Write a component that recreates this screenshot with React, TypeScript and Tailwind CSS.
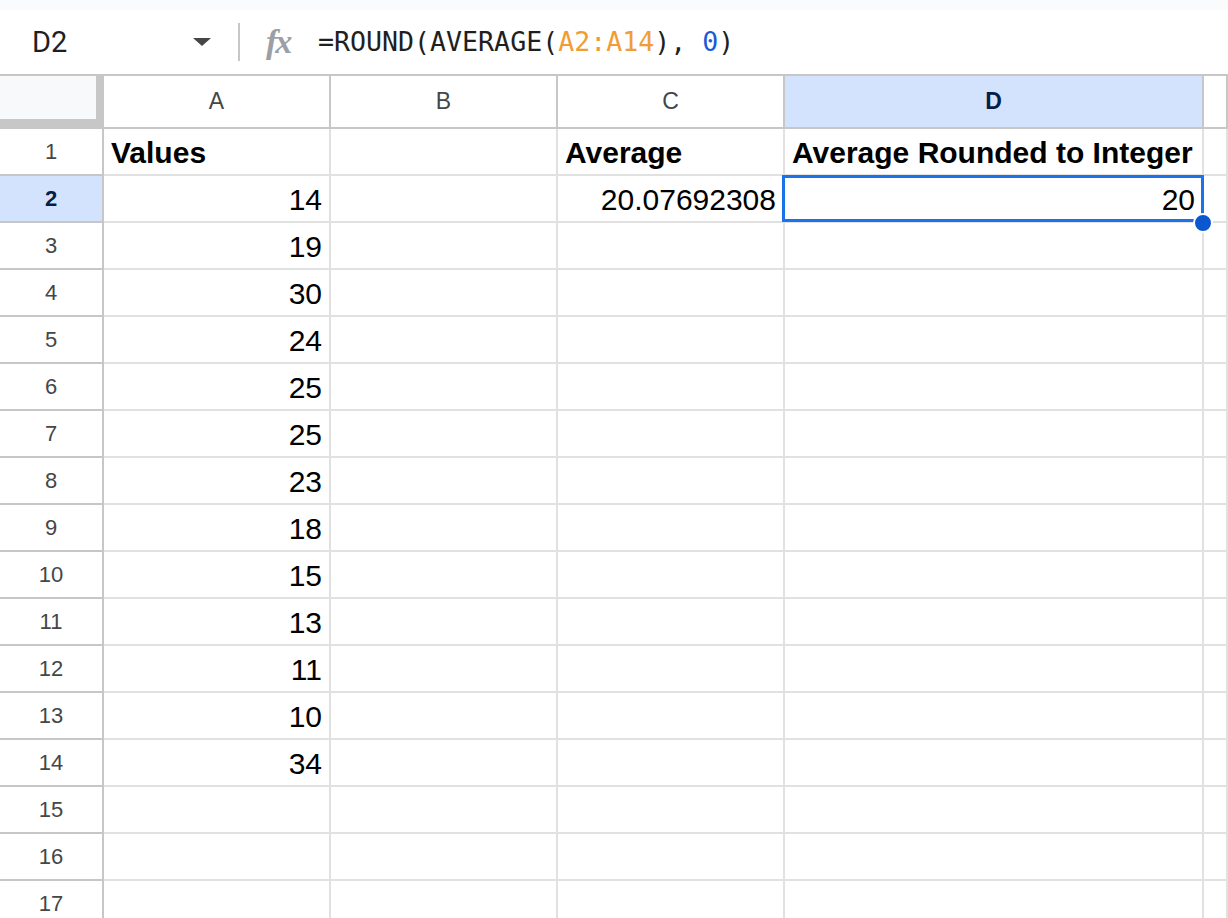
import React from "react";

type CellVal = { text: string; bold?: boolean; align?: "left" | "right" };

const values = ["14", "19", "30", "24", "25", "25", "23", "18", "15", "13", "11", "10", "34"];

function getRow(r: number): (CellVal | null)[] {
  const row: (CellVal | null)[] = [null, null, null, null, null];
  if (r === 1) {
    row[0] = { text: "Values", bold: true, align: "left" };
    row[2] = { text: "Average", bold: true, align: "left" };
    row[3] = { text: "Average Rounded to Integer", bold: true, align: "left" };
  } else if (r >= 2 && r <= 14) {
    row[0] = { text: values[r - 2], align: "right" };
  }
  if (r === 2) {
    row[2] = { text: "20.07692308", align: "right" };
    row[3] = { text: "20", align: "right" };
  }
  return row;
}

const cellFont = { fontFamily: '"Liberation Sans", Arial, sans-serif' };

export default function App() {
  const rows = Array.from({ length: 17 }, (_, i) => i + 1);
  const cols = ["A", "B", "C", "D", ""];
  return (
    <div className="w-[1228px] h-[918px] overflow-hidden bg-white">
      <div className="h-[10px] bg-[#f9fbfd]" />
      {/* Formula bar */}
      <div className="h-[66px] flex items-center border-b-2 border-[#c7c7c7] bg-white">
        <div
          className="w-[180px] pl-[32px] text-[29px] text-[#1f1f1f] leading-none"
          style={{ fontFamily: 'Roboto, "Liberation Sans", sans-serif' }}
        >
          D2
        </div>
        <div className="w-[20px] flex items-center justify-center ml-[12px]">
          <svg width="18" height="8" viewBox="0 0 18 8">
            <path d="M0 0 L18 0 L9 8 Z" fill="#444746" />
          </svg>
        </div>
        <div className="ml-[26px] w-[2px] h-[38px] bg-[#c7c7c7]" />
        <div
          className="ml-[26px] w-[36px] text-[34px] italic font-bold text-[#9aa0a6] leading-none tracking-[-2px]"
          style={{ fontFamily: '"Liberation Serif", "DejaVu Serif", serif' }}
        >
          fx
        </div>
        <div
          className="ml-[16px] text-[26.6px] text-[#1f1f1f] leading-none whitespace-pre"
          style={{ fontFamily: '"DejaVu Sans Mono", "Liberation Mono", monospace' }}
        >
          =ROUND(AVERAGE(<span className="text-[#f09d38]">A2:A14</span>), <span className="text-[#1a5bd6]">0</span>)
        </div>
      </div>
      {/* Grid */}
      <div className="grid grid-cols-[104px_227px_227px_227px_419px_1fr]" style={cellFont}>
        {/* header row */}
        <div className="h-[53px] bg-white">
          <div className="w-[104px] h-[53px] bg-[#f8f9fa] border-r-[8px] border-b-[10px] border-[#c7c7c7]" />
        </div>
        {cols.map((c, i) => (
          <div
            key={"h" + i}
            className={
              "h-[53px] border-r-2 border-b-2 border-[#c7c7c7] flex items-center justify-center text-[23px] " +
              (c === "D" ? "bg-[#d3e3fd] text-[#041e49] font-bold" : "bg-white text-[#444746]")
            }
          >
            {c}
          </div>
        ))}
        {rows.map((r) => {
          const data = getRow(r);
          return (
            <React.Fragment key={r}>
              <div
                className={
                  "h-[47px] border-r-2 border-b-2 border-[#c7c7c7] flex items-center justify-center text-[22px] " +
                  (r === 2 ? "bg-[#d3e3fd] text-[#041e49] font-bold" : "bg-white text-[#444746]")
                }
              >
                {r}
              </div>
              {data.map((cell, ci) => (
                <div
                  key={ci}
                  className={
                    "relative h-[47px] border-r-2 border-b-2 border-[#e1e1e1] flex items-end pb-[6px] px-[7px] text-[30px] leading-[30px] text-black whitespace-nowrap " +
                    (cell && cell.align === "right" ? "justify-end" : "justify-start") +
                    (cell && cell.bold ? " font-bold" : "") +
                    (r === 2 && ci === 3 ? " z-10" : "")
                  }
                >
                  {cell ? cell.text : null}
                  {r === 2 && ci === 3 ? (
                    <>
                      <div className="absolute left-[-3px] top-[-1px] w-[422px] h-[47px] border-[3px] border-[#1a73e8] pointer-events-none z-10" />
                      <div className="absolute left-[408px] top-[37px] w-[20px] h-[20px] rounded-full bg-[#0b57d0] border-2 border-white z-20" />
                    </>
                  ) : null}
                </div>
              ))}
            </React.Fragment>
          );
        })}
      </div>
    </div>
  );
}
